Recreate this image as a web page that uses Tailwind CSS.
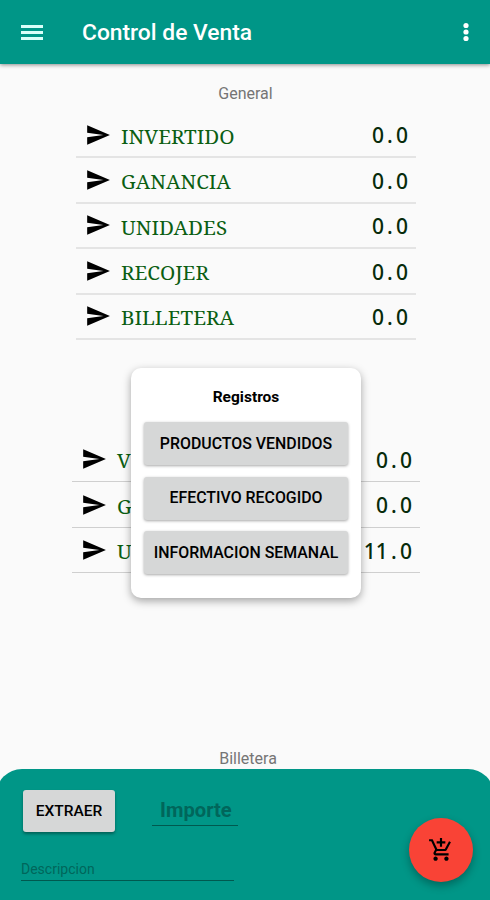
<!DOCTYPE html>
<html lang="es">

<head>
  <meta charset="UTF-8" />
  <meta name="viewport" content="width=device-width, initial-scale=1.0" />
  <title>Control de Venta</title>
  <script src="https://cdn.jsdelivr.net/npm/@tailwindcss/browser@4"></script>
</head>

<body class="bg-[#fafafa] font-[Roboto,sans-serif] text-black">
  <!-- Send arrow shared by all rows -->
  <svg class="hidden">
    <symbol id="send" viewBox="0 0 24 24">
      <path d="M2.01 21L23 12 2.01 3 2 10l15 2-15 2z" />
    </symbol>
  </svg>

  <div class="relative flex h-[900px] w-[490px] flex-col overflow-hidden">

    <!-- App bar -->
    <header class="flex h-16 shrink-0 items-center bg-[#009687] pr-[13px] pl-[21px] text-white shadow-[0_1px_4px_rgba(0,0,0,0.45)]">
      <button class="flex h-[15px] w-[22px] flex-col justify-between">
        <span class="h-[3px] w-full bg-[#d9fff9]"></span>
        <span class="h-[3px] w-full bg-[#d9fff9]"></span>
        <span class="h-[3px] w-full bg-[#d9fff9]"></span>
      </button>
      <h1 class="ml-[39px] flex-1 pt-[3px] text-[22.8px] leading-none font-medium">Control de Venta</h1>
      <svg class="size-[22px]" viewBox="0 0 22 22" fill="currentColor">
        <circle cx="11" cy="4.500" r="2.600" />
        <circle cx="11" cy="11" r="2.600" />
        <circle cx="11" cy="17.500" r="2.600" />
      </svg>
    </header>

    <!-- General totals -->
    <h2 class="mt-5 ml-px text-center text-base leading-5 text-[#757575]">General</h2>
    <ul class="mt-[9px] ml-[76px] w-[340px] font-['Noto_Serif','DejaVu_Serif_Condensed','DejaVu_Serif',serif] text-[20.6px] text-[#0b5e12]">
      <li class="flex h-[45.4px] items-center border-b-2 border-[#e4e4e4] pr-[8px] pl-[9px]">
        <svg class="size-[26px] fill-black"><use href="#send" /></svg>
        <span class="ml-[10px] flex-1 pt-[3px]">INVERTIDO</span>
        <span class="pt-[3px] font-['Noto_Sans',sans-serif] text-[21px] font-medium text-[#072b0a]">0<span class="px-[3.2px]">.</span>0</span>
      </li>
      <li class="flex h-[45.4px] items-center border-b-2 border-[#e4e4e4] pr-[8px] pl-[9px]">
        <svg class="size-[26px] fill-black"><use href="#send" /></svg>
        <span class="ml-[10px] flex-1 pt-[3px]">GANANCIA</span>
        <span class="pt-[3px] font-['Noto_Sans',sans-serif] text-[21px] font-medium text-[#072b0a]">0<span class="px-[3.2px]">.</span>0</span>
      </li>
      <li class="flex h-[45.4px] items-center border-b-2 border-[#e4e4e4] pr-[8px] pl-[9px]">
        <svg class="size-[26px] fill-black"><use href="#send" /></svg>
        <span class="ml-[10px] flex-1 pt-[3px]">UNIDADES</span>
        <span class="pt-[3px] font-['Noto_Sans',sans-serif] text-[21px] font-medium text-[#072b0a]">0<span class="px-[3.2px]">.</span>0</span>
      </li>
      <li class="flex h-[45.4px] items-center border-b-2 border-[#e4e4e4] pr-[8px] pl-[9px]">
        <svg class="size-[26px] fill-black"><use href="#send" /></svg>
        <span class="ml-[10px] flex-1 pt-[3px]">RECOJER</span>
        <span class="pt-[3px] font-['Noto_Sans',sans-serif] text-[21px] font-medium text-[#072b0a]">0<span class="px-[3.2px]">.</span>0</span>
      </li>
      <li class="flex h-[45.4px] items-center border-b-2 border-[#e4e4e4] pr-[8px] pl-[9px]">
        <svg class="size-[26px] fill-black"><use href="#send" /></svg>
        <span class="ml-[10px] flex-1 pt-[3px]">BILLETERA</span>
        <span class="pt-[3px] font-['Noto_Sans',sans-serif] text-[21px] font-medium text-[#072b0a]">0<span class="px-[3.2px]">.</span>0</span>
      </li>
    </ul>

    <!-- Second list, mostly behind the dialog -->
    <ul class="mt-[97px] ml-[72px] w-[348px] font-['Noto_Serif','DejaVu_Serif_Condensed','DejaVu_Serif',serif] text-[20.6px] text-[#0b5e12]">
      <li class="flex h-[45.4px] items-center border-b border-[#cfcfcf] pr-[8px] pl-[9px]">
        <svg class="size-[26px] fill-black"><use href="#send" /></svg>
        <span class="ml-[10px] flex-1 pt-[3px]">V</span>
        <span class="pt-[3px] font-['Noto_Sans',sans-serif] text-[21px] font-medium text-[#072b0a]">0<span class="px-[3.2px]">.</span>0</span>
      </li>
      <li class="flex h-[45.4px] items-center border-b border-[#cfcfcf] pr-[8px] pl-[9px]">
        <svg class="size-[26px] fill-black"><use href="#send" /></svg>
        <span class="ml-[10px] flex-1 pt-[3px]">G</span>
        <span class="pt-[3px] font-['Noto_Sans',sans-serif] text-[21px] font-medium text-[#072b0a]">0<span class="px-[3.2px]">.</span>0</span>
      </li>
      <li class="flex h-[45.4px] items-center border-b border-[#cfcfcf] pr-[8px] pl-[9px]">
        <svg class="size-[26px] fill-black"><use href="#send" /></svg>
        <span class="ml-[10px] flex-1 pt-[3px]">U</span>
        <span class="pt-[3px] font-['Noto_Sans',sans-serif] text-[21px] font-medium text-[#072b0a]">11<span class="px-[3.2px]">.</span>0</span>
      </li>
    </ul>

    <!-- Wallet -->
    <h2 class="mt-auto ml-[6px] text-center text-base leading-5 text-[#757575]">Billetera</h2>
    <footer class="-mx-1 h-[131px] shrink-0 rounded-t-[26px] bg-[#009687] px-[26px] pt-[21px]">
      <div class="flex">
        <button class="ml-px h-[42px] w-[92px] rounded-[3px] bg-[#d6d7d7] pt-[2px] text-[15.5px] font-medium shadow-[0_2px_3px_rgba(0,0,0,0.35)]">EXTRAER</button>
        <div class="ml-[37px] h-[36px] w-[86px] border-b border-[#00594f] pt-[6px] pl-[8px] text-[20.2px] leading-7 font-bold text-[#00665b]">Importe</div>
      </div>
      <div class="mt-[26px] -ml-px h-[23px] w-[213px] border-b border-[#00594f] pt-px text-[14px] leading-5 text-[#00665b]">Descripcion</div>
    </footer>

    <!-- Registros dialog -->
    <div class="absolute top-[368px] left-[131px] flex h-[230px] w-[230px] flex-col items-center rounded-[10px] bg-white shadow-[0_3px_9px_rgba(0,0,0,0.35)]">
      <h3 class="mt-[19px] mb-[15px] text-[15.5px] leading-5 font-bold">Registros</h3>
      <div class="flex w-[204px] flex-col gap-[11.5px] text-[15.9px] font-medium">
        <button class="h-[43px] rounded-[3px] bg-[#d6d7d7] shadow-[0_1px_3px_rgba(0,0,0,0.35)]">PRODUCTOS VENDIDOS</button>
        <button class="h-[43px] rounded-[3px] bg-[#d6d7d7] shadow-[0_1px_3px_rgba(0,0,0,0.35)]">EFECTIVO RECOGIDO</button>
        <button class="h-[43px] rounded-[3px] bg-[#d6d7d7] whitespace-nowrap shadow-[0_1px_3px_rgba(0,0,0,0.35)]">INFORMACION SEMANAL</button>
      </div>
    </div>

    <!-- Add to cart button -->
    <button class="absolute top-[818px] left-[409px] flex size-16 items-center justify-center rounded-full bg-[#f94336] shadow-[0_4px_8px_rgba(0,0,0,0.3)]">
      <svg class="size-[26px]" viewBox="0 0 24 24">
        <path d="M11 9h2V6h3V4h-3V1h-2v3H8v2h3v3zm-4 9c-1.1 0-1.99.9-1.99 2S5.9 22 7 22s2-.9 2-2-.9-2-2-2zm10 0c-1.1 0-1.99.9-1.99 2s.89 2 1.99 2 2-.9 2-2-.9-2-2-2zm-9.83-3.25l.03-.12.9-1.63h7.45c.75 0 1.41-.41 1.75-1.03l3.86-7.01L19.42 4h-.01l-1.1 2-2.76 5H8.53l-.13-.27L6.16 6l-.95-2-.94-2H1v2h2l3.6 7.59-1.35 2.45c-.16.28-.25.61-.25.96 0 1.1.9 2 2 2h12v-2H7.42c-.13 0-.25-.11-.25-.25z" />
      </svg>
    </button>

  </div>
</body>

</html>
